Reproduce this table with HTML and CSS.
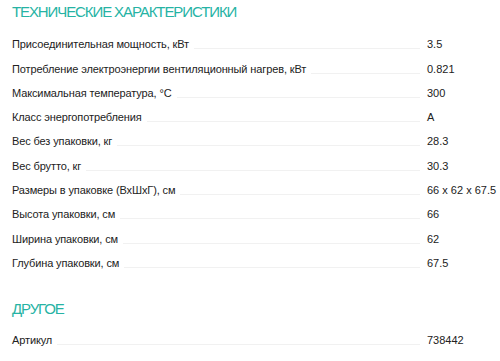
FILE: index.html
```html
<!DOCTYPE html>
<html>
<head>
<meta charset="utf-8">
<link rel="stylesheet" href="styles.css">
</head>
<body>
<section class="group">
  <h2 class="title">ТЕХНИЧЕСКИЕ ХАРАКТЕРИСТИКИ</h2>
  <div class="row"><span class="name">Присоединительная мощность, кВт</span><span class="fill"></span><span class="val">3.5</span></div>
  <div class="row"><span class="name">Потребление электроэнергии вентиляционный нагрев, кВт</span><span class="fill"></span><span class="val">0.821</span></div>
  <div class="row"><span class="name">Максимальная температура, °C</span><span class="fill"></span><span class="val">300</span></div>
  <div class="row"><span class="name">Класс энергопотребления</span><span class="fill"></span><span class="val">A</span></div>
  <div class="row"><span class="name">Вес без упаковки, кг</span><span class="fill"></span><span class="val">28.3</span></div>
  <div class="row"><span class="name">Вес брутто, кг</span><span class="fill"></span><span class="val">30.3</span></div>
  <div class="row"><span class="name">Размеры в упаковке (ВхШхГ), см</span><span class="fill"></span><span class="val">66 x 62 x 67.5</span></div>
  <div class="row"><span class="name">Высота упаковки, см</span><span class="fill"></span><span class="val">66</span></div>
  <div class="row"><span class="name">Ширина упаковки, см</span><span class="fill"></span><span class="val">62</span></div>
  <div class="row"><span class="name">Глубина упаковки, см</span><span class="fill"></span><span class="val">67.5</span></div>
</section>
<section class="group other">
  <h2 class="title">ДРУГОЕ</h2>
  <div class="row"><span class="name">Артикул</span><span class="fill"></span><span class="val">738442</span></div>
</section>
</body>
</html>
```

FILE: styles.css
```css
html, body {
  margin: 0;
  padding: 0;
  background: #fff;
}
body {
  font-family: "Liberation Sans", Arial, sans-serif;
  color: #222;
  padding: 0 0 0 12px;
}
.title {
  margin: 0;
  font-weight: normal;
  font-size: 15px;
  letter-spacing: -1.1px;
  color: #26b3a4;
  line-height: 20px;
  padding-top: 2px;
  margin-bottom: 8px;
}
.row {
  display: flex;
  align-items: flex-end;
  height: 24.3px;
  font-size: 11px;
  line-height: 14px;
}
.name {
  white-space: nowrap;
  padding-bottom: 3px;
  letter-spacing: -0.12px;
}
.fill {
  flex: 1;
  border-bottom: 1px solid #f1f1f1;
  margin: 0 7px 5px 5px;
}
.val {
  width: 73px;
  padding-bottom: 3px;
  white-space: nowrap;
}
.other {
  margin-top: 24px;
}
.other .title {
  margin-bottom: 7px;
}
```
